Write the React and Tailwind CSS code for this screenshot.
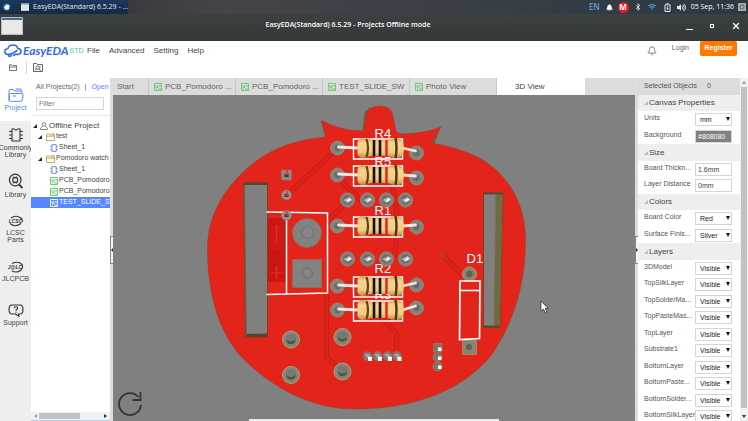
import { FaBell, FaBluetoothB, FaVolumeUp, FaWifi } from 'react-icons/fa';
import { Bell, X } from 'lucide-react';

const menus = ['File', 'Advanced', 'Setting', 'Help'];

const railItems = [
  { label: 'Project', icon: ProjectIcon, active: true },
  { label: 'Commonly Library', icon: ChipIcon },
  { label: 'Library', icon: LibraryIcon },
  { label: 'LCSC Parts', icon: LcscIcon },
  { label: 'JLCPCB', icon: JlcIcon },
  { label: 'Support', icon: SupportIcon },
];

const tree = [
  { label: 'test', kind: 'folder' },
  { label: 'Sheet_1', kind: 'sheet' },
  { label: 'Pomodoro watch', kind: 'folder' },
  { label: 'Sheet_1', kind: 'sheet' },
  { label: 'PCB_Pomodoro', kind: 'pcb' },
  { label: 'PCB_Pomodoro', kind: 'pcb' },
  { label: 'TEST_SLIDE_SW', kind: 'pcb', selected: true },
];

const tabs = ['PCB_Pomodoro ...', 'PCB_Pomodoro ...', 'TEST_SLIDE_SW', 'Photo View'];

const properties = [
  { type: 'header', label: 'Canvas Properties' },
  { type: 'select', label: 'Units', value: 'mm' },
  { type: 'color', label: 'Background', value: '#808080' },
  { type: 'header', label: 'Size' },
  { type: 'input', label: 'Board Thickn...', value: '1.6mm' },
  { type: 'input', label: 'Layer Distance', value: '0mm' },
  { type: 'header', label: 'Colors' },
  { type: 'select', label: 'Board Color', value: 'Red' },
  { type: 'select', label: 'Surface Finis...', value: 'Silver' },
  { type: 'header', label: 'Layers' },
  { type: 'select', label: '3DModel', value: 'Visible' },
  { type: 'select', label: 'TopSilkLayer', value: 'Visible' },
  { type: 'select', label: 'TopSolderMa...', value: 'Visible' },
  { type: 'select', label: 'TopPasteMas...', value: 'Visible' },
  { type: 'select', label: 'TopLayer', value: 'Visible' },
  { type: 'select', label: 'Substrate1', value: 'Visible' },
  { type: 'select', label: 'BottomLayer', value: 'Visible' },
  { type: 'select', label: 'BottomPaste...', value: 'Visible' },
  { type: 'select', label: 'BottomSolder...', value: 'Visible' },
  { type: 'select', label: 'BottomSilkLayer', value: 'Visible' },
];

/* Icons */

function ProjectIcon() {
  return (
    <svg viewBox="0 0 16 14" className="h-[14px] w-4" fill="none" stroke="#5588ff" strokeWidth="1">
      <path d="M1 12.5V2.5Q1 1.5 2 1.5H5L6.5 3H13Q14 3 14 4V5" />
      <path d="M13 3V1H8" />
      <path d="M1 13L1.5 6.5Q1.6 5.5 2.5 5.5H14.5Q15.4 5.5 15.2 6.5L14 12.5Q13.8 13.3 13 13.3H1.5" />
      <path d="M5 8H8" />
    </svg>
  );
}

function ChipIcon() {
  return (
    <svg viewBox="0 0 16 14" className="h-[14px] w-4" fill="none" stroke="#333" strokeWidth="1.1">
      <path d="M4 1H6.5Q8 3.2 9.5 1H12V13H4Z" />
      <path d="M1 3.5H4M1 7H4M1 10.5H4M12 3.5H15M12 7H15M12 10.5H15" />
    </svg>
  );
}

function LibraryIcon() {
  return (
    <svg viewBox="0 0 16 16" className="h-4 w-4" fill="none" stroke="#333" strokeWidth="1.2">
      <circle cx="7.2" cy="7" r="5.8" />
      <path d="M11 11.5L14.5 15" strokeWidth="1.8" />
      <rect x="4.8" y="4.8" width="4.8" height="4.4" rx="1" />
      <path d="M6 3.6V5M8.4 3.6V5M6 9V10.4M8.4 9V10.4" />
    </svg>
  );
}

function LcscIcon() {
  return (
    <svg viewBox="0 0 16 12" className="h-3 w-4" fill="none" stroke="#333">
      <path d="M3 3Q8 -0.5 13 3Q15 5 14 7M2 8.5Q7 13 13 8.5" strokeWidth="1.1" />
      <text x="7.5" y="8" textAnchor="middle" fontSize="5" fontWeight="700" fontStyle="italic" fill="#333" stroke="none">LCSC</text>
    </svg>
  );
}

function JlcIcon() {
  return (
    <svg viewBox="0 0 16 12" className="h-3 w-4" fill="none" stroke="#333">
      <path d="M4 2.5Q10 -0.5 14 3.5Q15.5 6 13 9Q9 12.5 4 10" strokeWidth="1.1" />
      <text x="7" y="8" textAnchor="middle" fontSize="5" fontWeight="700" fontStyle="italic" fill="#333" stroke="none">J@LC</text>
    </svg>
  );
}

function SupportIcon() {
  return (
    <svg viewBox="0 0 16 13" className="h-[13px] w-4" fill="none" stroke="#333" strokeWidth="1.1">
      <path d="M4 1H12Q15 1 15 5.5T12 10H10.5L11 12.3L7.5 10H4Q1 10 1 5.5T4 1Z" />
      <path d="M6.2 4.3Q6.3 2.8 8 2.8T9.7 4.3Q9.7 5.2 8 6V6.8M8 7.8V8.8" />
    </svg>
  );
}

function Caret() {
  return (
    <svg viewBox="0 0 5 5" className="mr-[3px] size-1 shrink-0">
      <path d="M5 0V5H0Z" fill="#222" />
    </svg>
  );
}

function FolderIcon() {
  return (
    <svg viewBox="0 0 9 8" className="h-2 w-[9px] shrink-0" fill="none" stroke="#c3a35a" strokeWidth="0.9">
      <path d="M0.5 7.5V1H3.5L4.2 2H8.5V7.5ZM0.5 3.2H8.5M5.2 0.7H8V2" />
    </svg>
  );
}

function SheetIcon() {
  return (
    <svg viewBox="0 0 8 8" className="size-2 shrink-0" fill="none" stroke="#5a86e0" strokeWidth="0.9">
      <path d="M2 0.6H6.2V7.4H2ZM0.2 2.3H2M0.2 5.7H2M6.2 2.3H7.8M6.2 5.7H7.8" />
    </svg>
  );
}

function PcbIcon({ color = '#5fcb6b' }) {
  return (
    <svg viewBox="0 0 8 8" className="size-2 shrink-0" fill="none" stroke={color} strokeWidth="0.9">
      <path d="M0.5 0.5H7.5V7.5H0.5ZM0.5 3H7.5M1.8 4.6H4L5.2 6.2H7M2 6.2H3" />
    </svg>
  );
}

/* Window chrome */

function TaskBar() {
  return (
    <div className="flex h-[14px] shrink-0 items-center bg-linear-to-r from-[#302c2f] via-[#46434a] via-30% to-[#293942] font-['Open_Sans','Noto_Sans',sans-serif] text-[7px] text-gray-200">
      <div className="flex h-full w-[128px] items-center bg-linear-to-b from-[#1c395a] to-[#132a46]">
        <svg viewBox="0 0 10 10" className="ml-[2px] size-[10px]">
          <circle cx="5" cy="5" r="4.5" fill="#1654a5" />
          <path d="M2 5L5 2.2L8 3.5L7 7.5L3.5 8Z" fill="#fff" />
        </svg>
        <svg viewBox="0 0 9 8" className="ml-[9px] h-2 w-[9px]">
          <path d="M0 0H9V8H0Z" fill="#e4e7e0" />
          <path d="M0 0H9V1.5H0Z" fill="#7890b0" />
        </svg>
        <span className="ml-1 whitespace-nowrap">EasyEDA(Standard) 6.5.29 - ...</span>
      </div>
      <div className="ml-auto flex items-center pr-[2px]">
        <span className="mr-[6px] font-['Noto_Sans',sans-serif] text-[8px] text-[#6db2e8]">EN</span>
        <FaBell className="mr-[5px] size-[7px] text-white" />
        <span className="mr-[5px] grid size-[11px] place-items-center rounded-full bg-[#e31b23] text-[8px] leading-none font-bold text-white">M</span>
        <FaBluetoothB className="mr-[6px] size-2" />
        <FaWifi className="mr-[8px] size-2 text-[#5da9e8]" />
        <svg viewBox="0 0 7 9" className="mr-[6px] h-[9px] w-[7px]" fill="none" stroke="#e5e7eb">
          <path d="M1 1.8H6V8.5H1ZM2.5 0.6H4.5" />
          <path d="M4 3L2.6 5.3H4.4L3.2 7.3" strokeWidth="0.8" />
        </svg>
        <FaVolumeUp className="mr-[5px] size-[9px]" />
        <time className="mr-1 whitespace-nowrap text-white">05 Sep, 11:36</time>
        <svg viewBox="0 0 8 8" className="size-2">
          <path d="M0 0H8V8H0Z" fill="#a5a9a8" />
          <circle cx="4" cy="4" r="2" fill="none" stroke="#5d6262" />
        </svg>
      </div>
    </div>
  );
}

function TitleBar() {
  return (
    <div className="flex h-[27px] shrink-0 items-center bg-linear-to-b from-[#3c4041] to-[#343839] pb-1 text-white">
      <div className="flex flex-1 pl-px">
        <svg viewBox="0 0 22 18" className="h-[18px] w-[22px]">
          <path d="M0 0H22V18H0Z" fill="#e9eae3" />
          <path d="M0 0H22V3H0Z" fill="#46699b" />
          <path d="M0.5 0.5H21.5V17.5H0.5Z" fill="none" stroke="#b9bdb8" />
        </svg>
      </div>
      <h1 className="pr-[46px] font-['Open_Sans','Noto_Sans',sans-serif] text-[7px] font-semibold">
        EasyEDA(Standard) 6.5.29 - Projects Offline mode
      </h1>
      <div className="flex flex-1 items-center justify-end gap-[13px] pr-[7px]">
        <button aria-label="Minimize" className="flex h-2 items-end"><span className="h-px w-[7px] bg-white" /></button>
        <button aria-label="Maximize" className="grid w-3 place-items-center"><span className="size-1 border border-white" /></button>
        <button aria-label="Close"><X className="size-[10px]" strokeWidth={3} /></button>
      </div>
    </div>
  );
}

function Header() {
  return (
    <header className="h-[37px] shrink-0 bg-white">
      <div className="flex h-[19px] items-center">
        <div className="flex w-[87px] items-center pl-1">
          <svg viewBox="0 0 18 14" className="h-[14px] w-[18px] shrink-0" fill="none" stroke="#2f6be0" strokeWidth="1.5" strokeLinecap="round">
            <path d="M5 10.5H3.5Q0.8 10 0.8 7.5T3.8 4.8Q5 1 9 1T13.8 4.5Q17 4.8 17 7.5T14 10.5H12.5" />
            <path d="M13 6.5L6.8 10.5" />
            <circle cx="5.8" cy="11.3" r="1.3" />
            <path d="M9.5 11.5L12 10" />
          </svg>
          <span className="ml-px font-[Lato,sans-serif] text-[12px] leading-none font-bold text-[#2f6be0] italic">EasyEDA</span>
          <span className="ml-px pt-[2px] text-[7px] text-[#5cc3a0]">STD</span>
        </div>
        <nav className="flex gap-[9px] pt-px text-[8px] text-[#444]">
          {menus.map((menu) => (
            <button key={menu}>{menu}</button>
          ))}
        </nav>
        <div className="ml-auto flex items-start self-start pr-[11px] text-[7px] text-[#666]">
          <button aria-label="Notifications" className="mr-[15px] pt-[5px]"><Bell className="size-[10px]" strokeWidth={2} /></button>
          <button className="mr-[11px] pt-[3px] text-[7px]">Login</button>
          <button className="h-[15px] w-[37px] rounded-xs bg-[#ff7800] text-[7px] font-bold text-white">Register</button>
        </div>
      </div>
      <div className="flex h-[14px] items-center pl-[9px]">
        <button aria-label="Open project">
          <svg viewBox="0 0 8 7" className="h-[7px] w-2" fill="none" stroke="#555" strokeWidth="0.8">
            <path d="M0.5 6.5V0.8H3L3.8 1.6H7.5V6.5ZM0.5 3H7.5" />
          </svg>
        </button>
        <span className="mr-[6px] ml-[9px] h-[13px] w-px bg-gray-300" />
        <button aria-label="Find in project">
          <svg viewBox="0 0 10 9" className="h-[9px] w-[10px]" fill="none" stroke="#555" strokeWidth="0.9">
            <path d="M0.5 8.5V0.5H3.5L4.5 1.5H9.5V8.5Z" />
            <circle cx="4.6" cy="4.6" r="1.7" />
            <path d="M5.8 5.8L8 7.8M2.2 7L3.4 5.8M7 3V4.5" />
          </svg>
        </button>
      </div>
    </header>
  );
}

function Rail() {
  return (
    <nav className="w-[31px] shrink-0 bg-[#eee]">
      {railItems.map(({ label, icon: Icon, active }) => (
        <button
          key={label}
          className={`flex h-[43px] w-full flex-col items-center justify-center gap-[2px] text-[7px] leading-[7px] ${active ? 'bg-white text-[#5588ff]' : 'text-[#444]'}`}
        >
          <Icon />
          <span>{label}</span>
        </button>
      ))}
    </nav>
  );
}

function TreeRow({ label, kind, selected }) {
  const folder = kind === 'folder';
  return (
    <li className={`flex h-[11px] items-center gap-px whitespace-nowrap ${folder ? 'pl-[7px]' : 'pl-[19px]'} ${selected ? 'bg-[#5588ff] text-white' : ''}`}>
      {folder && <Caret />}
      {folder && <FolderIcon />}
      {kind === 'sheet' && <SheetIcon />}
      {kind === 'pcb' && <PcbIcon color={selected ? '#fff' : '#5fcb6b'} />}
      <span>{label}</span>
    </li>
  );
}

function ProjectPanel() {
  return (
    <aside className="flex w-[79px] shrink-0 flex-col overflow-hidden bg-white text-[7px] text-[#444]">
      <div className="flex h-[18px] shrink-0 items-center pl-[5px] whitespace-nowrap text-[#666]">
        <span>All Projects(2)</span>
        <span className="mx-[5px]">|</span>
        <a href="#open" className="text-[#5588ff]">Open</a>
      </div>
      <div className="h-5 shrink-0 border-b border-gray-200 px-[5px] pt-px">
        <input aria-label="Filter" placeholder="Filter" className="h-[13px] w-[68px] border border-gray-300 px-[2px] placeholder:text-[#777]" />
      </div>
      <div className="flex-1 overflow-hidden pt-1">
        <div className="flex h-[11px] items-center pl-[2px] text-[8px] whitespace-nowrap">
          <Caret />
          <svg viewBox="0 0 8 8" className="mr-px size-2" fill="none" stroke="#777" strokeWidth="0.9">
            <circle cx="4" cy="2.3" r="1.8" />
            <path d="M2.8 4.3L0.6 6V7.5H7.4V6L5.2 4.3" />
          </svg>
          Offline Project
        </div>
        <ul>
          {tree.map((item, i) => (
            <TreeRow key={i} {...item} />
          ))}
        </ul>
      </div>
      <div className="flex h-[9px] shrink-0 items-center justify-between border-b border-[#b5cfe8] bg-[#f1f1f1] px-[3px]">
        <svg viewBox="0 0 3 4" className="h-1 w-[3px]"><path d="M3 0V4L0 2Z" fill="#999" /></svg>
        <span className="mr-[22px] h-[6px] w-[41px] bg-[#c1c1c1]" />
        <svg viewBox="0 0 3 4" className="h-1 w-[3px]"><path d="M0 0V4L3 2Z" fill="#333" /></svg>
      </div>
    </aside>
  );
}

function Splitter({ flip }) {
  return (
    <div className="flex w-[3px] shrink-0 flex-col items-center justify-center bg-[#dedede]">
      <button aria-label="Toggle panel" className="grid h-7 w-[3px] place-items-center border-y border-l border-[#888] bg-[#f4f4f4]">
        <svg viewBox="0 0 2 4" className="h-1 w-[2px]">
          <path d={flip ? 'M0 0V4L2 2Z' : 'M2 0V4L0 2Z'} fill="#333" />
        </svg>
      </button>
    </div>
  );
}

/* 3D board */

function Pad({ x, y, r = 7 }) {
  return (
    <g>
      <circle cx={x} cy={y} r={r} fill="#858381" stroke="#a08a62" strokeWidth="0.8" />
      <circle cx={x} cy={y} r={r * 0.45} fill="#6b6a66" />
    </g>
  );
}

function JointPad({ x, y }) {
  return (
    <g>
      <circle cx={x} cy={y} r="7.2" fill="#83817f" stroke="#a87c5c" strokeWidth="0.8" />
      <circle cx={x} cy={y} r="4.4" fill="#6b6a67" />
      <path d={`M${x - 4} ${y}L${x + 2} ${y - 3}L${x + 5} ${y}L${x} ${y + 3}Z`} fill="#b9b7b3" />
      <path d={`M${x} ${y + 1}L${x + 3} ${y - 1}`} stroke="#fff" strokeWidth="1.6" />
    </g>
  );
}

function Hole({ x, y }) {
  return (
    <g>
      <circle cx={x} cy={y} r="8.5" fill="#838381" stroke="#b8a068" />
      <circle cx={x} cy={y} r="4.8" fill="#55562f" />
      <path d={`M${x - 4.8} ${y}A4.8 4.8 0 0 1 ${x + 4.8} ${y}Q${x} ${y + 4} ${x - 4.8} ${y}Z`} fill="#787876" />
    </g>
  );
}

function Resistor({ y, left, right }) {
  return (
    <g>
      <path d={`M353 ${y - 9}H402V${y + 11}H353Z`} fill="none" stroke="#fff" strokeWidth="1.4" />
      <Pad x={337} y={left} />
      <Pad x={416} y={right} />
      <path d={`M338 ${left - 1}L358 ${y}M402 ${y}L415 ${right - 2}`} stroke="#eae7e5" strokeWidth="2.8" strokeLinecap="round" />
      <path d={`M357 ${y - 6}Q358 ${y - 10} 362 ${y - 10}Q366 ${y - 10} 370 ${y - 8}H388Q392 ${y - 10} 397 ${y - 10}Q403 ${y - 9} 403.5 ${y}Q403 ${y + 10} 397 ${y + 10}Q391 ${y + 10} 388 ${y + 8}H370Q366 ${y + 10} 361 ${y + 10}Q358 ${y + 9} 357 ${y + 6}Z`} fill="url(#resistorBody)" />
      <path d={`M366 ${y - 9}Q369 ${y} 366 ${y + 9}`} stroke="#67401b" strokeWidth="2.2" fill="none" />
      <path d={`M373.5 ${y - 8}V${y + 8}M379.5 ${y - 8}V${y + 8}`} stroke="#15120d" strokeWidth="2.6" />
      <path d={`M386 ${y - 8}V${y + 8}`} stroke="#ec1c1c" strokeWidth="2.4" />
      <path d={`M395 ${y - 10}Q397 ${y} 395 ${y + 10}`} stroke="#533112" strokeWidth="2.4" fill="none" />
    </g>
  );
}

function Board() {
  return (
    <svg viewBox="113 95 521 326" className="h-full w-full" role="img" aria-label="3D board view">
      <defs>
        <linearGradient id="resistorBody" x1="0" y1="0" x2="0" y2="1">
          <stop offset="0" stopColor="#cfa25a" />
          <stop offset="0.25" stopColor="#f6d68e" />
          <stop offset="0.7" stopColor="#f3cd7f" />
          <stop offset="1" stopColor="#b98a44" />
        </linearGradient>
      </defs>

      {/* board edge and solder mask */}
      <path d="M320 121L325 137L331 136L323 121ZM362 132L364 112L370 107L368 133ZM430 144L438 129L440 127L434 144Z" fill="#7a5a33" />
      <path
        d="M321.5 120.5Q340 131 363 131L366 114Q369 106 379 106Q390 106 392 114L395 129Q396 133.500 402 134Q421 134 440.5 127L431 143Q459 148 477 157C507 173 525 203 525 240C525 283 514 321 491 355C465 387 420 409 354 409C310 409 270 387 241 357C218 332 207 292 207 250C207 214 224 189 247 168C269 149 293 140 325 137Z"
        fill="#e2241a"
        stroke="#9c4328"
        strokeWidth="0.6"
      />

      {/* copper traces below the mask */}
      <g fill="none" stroke="#c91d16" strokeWidth="5">
        <path d="M335 150L288 194M337 177L363 203M352 196L326 222M326 294V357L341 371M392 187L396 207V243L393 257M380 317L396 333V350M443 256L463 276M346 283L361 283" />
      </g>
      <g fill="none" stroke="#dc221a" strokeWidth="3">
        <path d="M335 150L288 194M337 177L363 203M352 196L326 222M326 294V357L341 371M392 187L396 207V243L393 257M380 317L396 333V350M443 256L463 276M346 283L361 283" />
      </g>
      <circle cx="442" cy="255" r="2.5" fill="#b04030" />
      <path d="M267 218H286V282H267Z" fill="#c91812" />
      <path d="M270 226H283V250H270Z" fill="#d01b14" />
      <path d="M276 225V242M276 266V279M270 273H283" stroke="#db3328" strokeWidth="1.2" />

      {/* slots */}
      <path d="M243 183H267V337H245Z" fill="#808080" stroke="#8b3a22" strokeWidth="1" />
      <path d="M243.5 182.5H267V185H243.500ZM245 334L267 333.5V337H246Z" fill="#57452e" />
      <path d="M243.5 185L245.5 336" stroke="#6d5b3b" strokeWidth="1.6" />
      <path d="M483 193H502.5L499.5 327.500H483Z" fill="#808080" stroke="#8b3a22" strokeWidth="1" />
      <path d="M495.5 194H502L499.5 327H493.5Z" fill="#6c6c40" />
      <path d="M483 192.5H502.5V194.5H483ZM483 325.5H499V328H483Z" fill="#5a4b30" />
      <path d="M495 196L493.5 326" stroke="#8a6a45" strokeDasharray="8 3" />

      {/* push button footprint */}
      <circle cx="306.5" cy="233" r="14.5" fill="#828282" stroke="#a5674b" />
      <circle cx="307" cy="232.5" r="6" fill="#858585" stroke="#6e6e6e" />
      <path d="M292 259.5H321V287.5H292Z" fill="#828282" stroke="#a5674b" />
      <circle cx="307" cy="273" r="5" fill="#858585" stroke="#6e6e6e" />
      <path d="M266 212L327 213V293L266 294.5M286 216V294" fill="none" stroke="#fff" strokeWidth="1.5" />

      {/* three pin header */}
      <path d="M281 170H291V180H281Z" fill="#8e8682" stroke="#a8705c" strokeWidth="0.5" />
      <circle cx="286" cy="195" r="5" fill="#96908c" stroke="#a8705c" strokeWidth="0.5" />
      <circle cx="286" cy="215.5" r="5" fill="#96908c" stroke="#a8705c" strokeWidth="0.5" />
      <path d="M284 174H288V177H284ZM284 194H288V197H284ZM284 214H288V217H284Z" fill="#4b3433" />
      <path d="M286.5 170V175M286.5 191V196M286.5 211V216" stroke="#e3313a" strokeWidth="1.6" />

      {/* reference designators */}
      <g fill="#fff" fontSize="13">
        <text x="374" y="138">R4</text>
        <text x="374" y="166">R5</text>
        <text x="374" y="215">R1</text>
        <text x="374" y="273">R2</text>
        <text x="374" y="299">R3</text>
        <text x="466" y="263">D1</text>
      </g>

      {[347, 367, 386, 405].map((x) => (
        <g key={x}>
          <JointPad x={x} y={200} />
          <JointPad x={x} y={259} />
        </g>
      ))}

      <Resistor y={148} left={148} right={153} />
      <Resistor y={175} left={175} right={178} />
      <Resistor y={226} left={226} right={227} />
      <Resistor y={286} left={286} right={285} />
      <Resistor y={310} left={310} right={308} />

      <Hole x={290.5} y={339.5} />
      <Hole x={290.5} y={375} />
      <Hole x={342} y={337} />
      <Hole x={342} y={371.5} />

      {/* pin rows */}
      {[367, 377, 387, 396.5].map((x) => (
        <g key={x}>
          <circle cx={x} cy={356} r="4.6" fill="#7c7b77" stroke="#a5674b" strokeWidth="0.5" />
          <path d={`M${x - 3} 354L${x + 1} 354L${x + 5} 358H${x}Z`} fill="#aaa7a3" />
          <path d={`M${x + 0.5} 357H${x + 4.5}V361H${x + 0.5}Z`} fill="#fff" />
        </g>
      ))}
      <path d="M433 343.5H441.5V352H433Z" fill="#77766f" stroke="#b08a5b" strokeWidth="0.5" />
      <circle cx="437" cy="357" r="4.6" fill="#77766f" stroke="#b08a5b" strokeWidth="0.5" />
      <circle cx="437" cy="366.5" r="4.6" fill="#77766f" stroke="#b08a5b" strokeWidth="0.5" />
      <path d="M437.5 347.5H441V351H437.500ZM437.5 356.5H441V360H437.500ZM437.5 365.5H441V369H437.500Z" fill="#fff" />

      {/* diode */}
      <circle cx="469" cy="274" r="7" fill="#858478" stroke="#b3955f" />
      <circle cx="469" cy="274" r="3.3" fill="#62633b" />
      <path d="M462 340H476V354.5H462Z" fill="#858478" stroke="#b3955f" strokeWidth="0.7" />
      <circle cx="468.5" cy="347" r="3" fill="#62633b" />
      <path d="M459.5 281H479.5L479 338.5L459 339.5ZM459.5 290.5H479.5" fill="#e2241a" stroke="#fff" strokeWidth="1.7" />

      {/* rotate handle */}
      <path d="M138 397A11 11 0 1 0 140.5 405" fill="none" stroke="#333" strokeWidth="1.8" />
      <path d="M140 392V400H132" fill="none" stroke="#333" strokeWidth="1.8" />

      {/* mouse pointer */}
      <path d="M540.5 301V311L543 309L544.5 312.5L546.2 311.8L544.7 308.5H547.5Z" fill="#fff" stroke="#222" strokeWidth="0.7" />
    </svg>
  );
}

function Workspace() {
  return (
    <main className="flex min-w-0 flex-1 flex-col">
      <div role="tablist" className="flex h-[17px] shrink-0 bg-[#dcdcdc] text-[8px] text-[#666]">
        <button role="tab" className="w-9 border-r border-[#c6c6c6] pl-1 text-left">Start</button>
        {tabs.map((tab, i) => (
          <button key={i} role="tab" className="flex w-[87px] items-center gap-[3px] border-r border-[#c6c6c6] pl-[5px] whitespace-nowrap">
            <PcbIcon />
            {tab}
          </button>
        ))}
        <button role="tab" aria-selected="true" className="w-[88px] bg-white pl-[18px] text-left text-[#444]">3D View</button>
      </div>
      <div className="relative min-h-0 flex-1 bg-[#808080]">
        <Board />
        <div className="absolute bottom-0 left-[26%] h-[2px] w-[48%] bg-[#eee]" />
      </div>
    </main>
  );
}

function PropertyRow({ type, label, value }) {
  if (type === 'header') {
    return (
      <h2 className="flex items-center bg-[#eee] pl-[6px] text-[8px] text-[#444]">
        <svg viewBox="0 0 4 4" className="mr-px size-1"><path d="M4 0V4H0Z" fill="#bbb" /></svg>
        {label}
      </h2>
    );
  }
  return (
    <label className="flex items-center justify-between pr-2 pl-[6px]">
      <span className="pb-[2px] whitespace-nowrap">{label}</span>
      {type === 'select' ? (
        <span className="relative h-[13px] w-[37px] shrink-0">
          <select className="h-[13px] w-full appearance-none overflow-hidden border border-gray-300 bg-white pl-1 text-[7px] leading-[11px] text-[#222]">
            <option>{value}</option>
          </select>
          <svg viewBox="0 0 4 4" className="pointer-events-none absolute top-1 right-[2px] size-1"><path d="M0 0H4L2 4Z" fill="#111" /></svg>
        </span>
      ) : (
        <input
          defaultValue={value}
          className={`h-[13px] w-[37px] shrink-0 border border-gray-300 pl-[2px] ${type === 'color' ? 'bg-[#808080] text-white' : 'bg-white text-[#444]'}`}
        />
      )}
    </label>
  );
}

function PropertiesPanel() {
  return (
    <aside className="flex w-[110px] shrink-0 bg-white text-[7px] text-[#555]">
      <div className="min-w-0 flex-1 overflow-hidden">
        <div className="flex h-[17px] items-center gap-[10px] bg-[#dcdcdc] pl-[6px]">
          <span>Selected Objects</span>
          <span>0</span>
        </div>
        <div className="grid auto-rows-[16px_17px]">
          {properties.map((row) => (
            <PropertyRow key={row.label} {...row} />
          ))}
        </div>
      </div>
      <div className="flex w-2 flex-col items-center justify-between bg-[#f1f1f1] py-[3px]">
        <svg viewBox="0 0 4 3" className="h-[3px] w-1"><path d="M0 3H4L2 0Z" fill="#999" /></svg>
        <span className="mt-[3px] mb-[7px] w-[6px] flex-1 bg-[#c1c1c1]" />
        <svg viewBox="0 0 4 3" className="h-[3px] w-1"><path d="M0 0H4L2 3Z" fill="#333" /></svg>
      </div>
    </aside>
  );
}

export default function App() {
  return (
    <div className="flex h-screen flex-col overflow-hidden bg-white font-['Liberation_Sans',Arial,sans-serif] leading-tight">
      <TaskBar />
      <TitleBar />
      <Header />
      <div className="flex min-h-0 flex-1">
        <Rail />
        <ProjectPanel />
        <Splitter />
        <Workspace />
        <Splitter flip />
        <PropertiesPanel />
      </div>
    </div>
  );
}
